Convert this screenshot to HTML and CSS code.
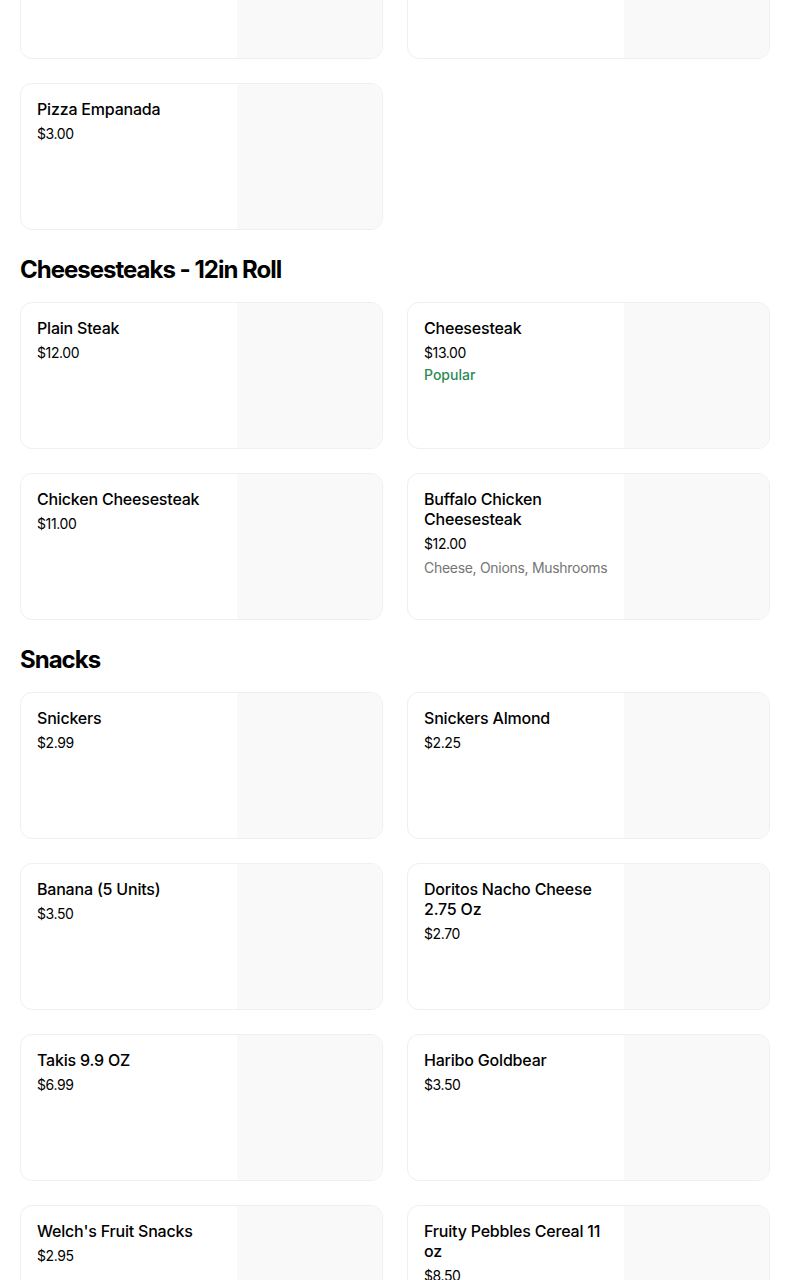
FILE: index.html
```html
<!DOCTYPE html>
<html>
<head>
<meta charset="utf-8">
<link rel="stylesheet" href="styles.css">
</head>
<body>
<main class="menu">
  <section class="section section-first">
    <div class="grid">
      <div class="card"><div class="info"><div class="name">Cheese Empanada</div><div class="price">$3.00</div></div><div class="thumb"></div></div>
      <div class="card"><div class="info"><div class="name">Beef Empanada</div><div class="price">$3.00</div></div><div class="thumb"></div></div>
      <div class="card"><div class="info"><div class="name">Pizza Empanada</div><div class="price">$3.00</div></div><div class="thumb"></div></div>
    </div>
  </section>

  <section class="section">
    <h2 class="heading">Cheesesteaks - 12in Roll</h2>
    <div class="grid">
      <div class="card"><div class="info"><div class="name">Plain Steak</div><div class="price">$12.00</div></div><div class="thumb"></div></div>
      <div class="card"><div class="info"><div class="name">Cheesesteak</div><div class="price">$13.00</div><div class="tag">Popular</div></div><div class="thumb"></div></div>
      <div class="card"><div class="info"><div class="name">Chicken Cheesesteak</div><div class="price">$11.00</div></div><div class="thumb"></div></div>
      <div class="card"><div class="info"><div class="name">Buffalo Chicken Cheesesteak</div><div class="price">$12.00</div><div class="desc">Cheese, Onions, Mushrooms</div></div><div class="thumb"></div></div>
    </div>
  </section>

  <section class="section">
    <h2 class="heading">Snacks</h2>
    <div class="grid">
      <div class="card"><div class="info"><div class="name">Snickers</div><div class="price">$2.99</div></div><div class="thumb"></div></div>
      <div class="card"><div class="info"><div class="name">Snickers Almond</div><div class="price">$2.25</div></div><div class="thumb"></div></div>
      <div class="card"><div class="info"><div class="name">Banana (5 Units)</div><div class="price">$3.50</div></div><div class="thumb"></div></div>
      <div class="card"><div class="info"><div class="name">Doritos Nacho Cheese 2.75 Oz</div><div class="price">$2.70</div></div><div class="thumb"></div></div>
      <div class="card"><div class="info"><div class="name">Takis 9.9 OZ</div><div class="price">$6.99</div></div><div class="thumb"></div></div>
      <div class="card"><div class="info"><div class="name">Haribo Goldbear</div><div class="price">$3.50</div></div><div class="thumb"></div></div>
      <div class="card"><div class="info"><div class="name">Welch's Fruit Snacks</div><div class="price">$2.95</div></div><div class="thumb"></div></div>
      <div class="card"><div class="info"><div class="name">Fruity Pebbles Cereal 11 oz</div><div class="price">$8.50</div></div><div class="thumb"></div></div>
    </div>
  </section>
</main>
</body>
</html>
```

FILE: styles.css
```css
html, body {
  margin: 0;
  padding: 0;
  background: #ffffff;
}

body {
  font-family: Inter, "Noto Sans", "Liberation Sans", sans-serif;
  color: #000000;
  overflow: hidden;
  height: 1280px;
}

.menu {
  padding: 0 34px 0 20px;
}

.section-first {
  margin-top: -88px;
}

.heading {
  margin: 24px 0 16px;
  font-size: 24px;
  line-height: 32px;
  font-weight: 700;
  letter-spacing: -1px;
}

.grid {
  display: grid;
  grid-template-columns: 363px 363px;
  column-gap: 24px;
  row-gap: 24px;
}

.card {
  box-sizing: border-box;
  height: 147px;
  border: 1px solid #efefef;
  border-radius: 12px;
  overflow: hidden;
  display: flex;
  background: #ffffff;
}

.info {
  flex: 1;
  padding: 15px 8px 16px 16px;
  min-width: 0;
}

.thumb {
  width: 145px;
  flex: none;
  background: #f9f9f9;
}

.name {
  font-size: 16px;
  line-height: 20px;
  font-weight: 500;
  letter-spacing: -0.2px;
  padding-right: 6px;
}

.price {
  margin-top: 5px;
  font-size: 14px;
  line-height: 20px;
  font-weight: 400;
  letter-spacing: -0.4px;
}

.tag {
  margin-top: 2px;
  font-size: 14px;
  line-height: 20px;
  font-weight: 500;
  color: #2d8a55;
}

.desc {
  margin-top: 4px;
  font-size: 14px;
  line-height: 20px;
  color: #757575;
  letter-spacing: -0.3px;
  white-space: nowrap;
}
```
